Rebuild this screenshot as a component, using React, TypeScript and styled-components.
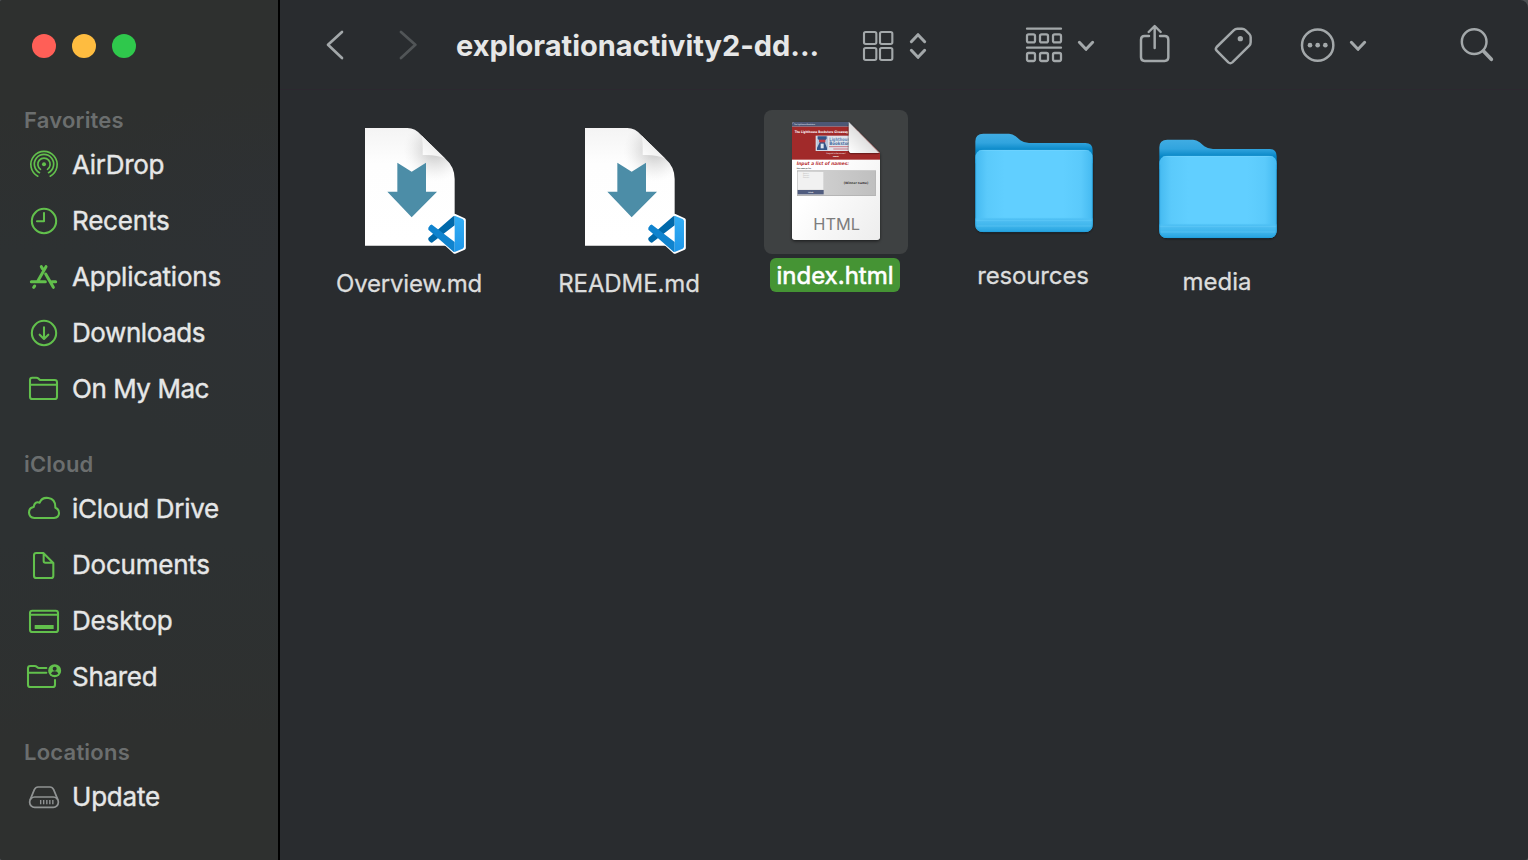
import React from "react";
import styled, { createGlobalStyle } from "styled-components";

const GREEN = "#62c04c";
const GREY = "#a3a8aa";

const GlobalStyle = createGlobalStyle`
  * { box-sizing: border-box; }
  body { margin: 0; background: #4c5052; overflow: hidden; }
`;

const Window = styled.div`
  display: flex;
  width: 1528px;
  height: 860px;
  border-radius: 3px 8px 3px 3px;
  background: #292c2f;
  color: #e6e7e7;
  font-family: Inter, "Liberation Sans", sans-serif;
  overflow: hidden;
`;

const Sidebar = styled.aside`
  flex: 0 0 280px;
  display: flex;
  flex-direction: column;
  border-right: 2px solid #000;
  background:
    radial-gradient(circle at 100% 32%, #2e3134 0, #2e313400 200px),
    linear-gradient(180deg, #2e302f 0, #2e302f 110px, #2d3132 250px, #2d3132 540px, #2e302f 740px, #2e302f 100%);
`;

const Lights = styled.div`
  display: flex;
  gap: 16px;
  height: 103px;
  padding: 34px 32px 0;
`;

const Light = styled.span<{ $color: string }>`
  width: 24px;
  height: 24px;
  border-radius: 50%;
  background: ${(p) => p.$color};
`;

const Section = styled.section`
  margin-bottom: 30px;
`;

const Heading = styled.h2<{ $track: number }>`
  margin: 0;
  padding-left: 24px;
  font-size: 22px;
  line-height: 34px;
  font-weight: 600;
  letter-spacing: ${(p) => p.$track}px;
  color: #6b6e6e;
`;

const Row = styled.div`
  display: flex;
  align-items: center;
  gap: 8px;
  height: 56px;
  padding-left: 24px;
`;

const RowText = styled.span<{ $track: number }>`
  font-size: 26px;
  line-height: 32px;
  font-weight: 400;
  white-space: nowrap;
  letter-spacing: ${(p) => p.$track}px;
  -webkit-text-stroke: 0.4px currentColor;
`;

const RowIcon = styled.svg<{ $color?: string }>`
  flex: none;
  width: 40px;
  height: 40px;
  color: ${(p) => p.$color ?? GREEN};
  fill: none;
  stroke: currentColor;
  stroke-width: 6.2;
  stroke-linecap: round;
  stroke-linejoin: round;
`;

const Main = styled.main`
  flex: 1;
  display: flex;
  flex-direction: column;
`;

const Toolbar = styled.header`
  display: flex;
  align-items: center;
  height: 90px;
  padding-left: 44px;
  box-shadow: inset 0 -1px #2c2830;
`;

const Tool = styled.svg<{ $width: number; $lead?: number }>`
  flex: none;
  width: ${(p) => p.$width}px;
  height: 48px;
  margin-left: ${(p) => p.$lead ?? 0}px;
  fill: none;
  stroke: ${GREY};
  stroke-width: 7.4;
  stroke-linecap: round;
  stroke-linejoin: round;
`;

const Title = styled.h1`
  flex: 0 0 368px;
  margin: 0 36px;
  padding-top: 1px;
  font-size: 29px;
  line-height: 40px;
  font-weight: 700;
  letter-spacing: -0.02px;
  white-space: nowrap;
`;

const Files = styled.div`
  display: flex;
  align-items: flex-start;
  padding: 20px 0 0 57px;
`;

const File = styled.figure<{ $lead: number; $drop: number }>`
  display: flex;
  flex-direction: column;
  align-items: center;
  gap: 4px;
  width: 144px;
  margin: ${(p) => p.$drop}px 0 0 ${(p) => p.$lead}px;
`;

const Artwork = styled.svg<{ $selected?: boolean }>`
  display: block;
  width: 144px;
  height: 144px;
  border-radius: 8px;
  background: ${(p) => (p.$selected ? "#3e4142" : "transparent")};
`;

const Caption = styled.figcaption<{ $selected?: boolean; $track: number }>`
  margin-right: ${(p) => (p.$selected ? 2 : 0)}px;
  padding: 2px 6px 0;
  border-radius: 6px;
  font-size: 24px;
  line-height: 32px;
  white-space: nowrap;
  letter-spacing: ${(p) => p.$track}px;
  color: ${(p) => (p.$selected ? "#fff" : "#dcdddd")};
  background: ${(p) => (p.$selected ? "#459434" : "transparent")};
  -webkit-text-stroke: ${(p) => (p.$selected ? 0.6 : 0.3)}px currentColor;
`;

const AirDropIcon = () => (
  <RowIcon viewBox="72 435 120 120">
    <g strokeWidth="5">
      <path d="M113.500 528.500A39.500 39.500 0 1 1 150.500 528.500" />
      <path d="M118.500 518A29 29 0 1 1 145.500 518" />
      <path d="M121.500 508A18.500 18.500 0 1 1 142.500 508" />
    </g>
    <circle cx="132" cy="493" r="6" fill="currentColor" stroke="none" />
  </RowIcon>
);

const ClockIcon = () => (
  <RowIcon viewBox="72 603 120 120">
    <circle cx="132" cy="663" r="36.500" />
    <path d="M132 639V664H111" />
  </RowIcon>
);

const AppsIcon = () => (
  <RowIcon viewBox="72 51 120 120">
    <g strokeWidth="9">
      <path d="M138 80L114 122M124 80L128 87M94 125H136M137 102L160 142M155 125H167M104 138L101 142" />
    </g>
  </RowIcon>
);

const DownloadIcon = () => (
  <RowIcon viewBox="72 219 120 120">
    <circle cx="132" cy="279" r="36.500" />
    <path d="M132 262V296M119 284L132 297L145 284" />
  </RowIcon>
);

const FolderIcon = () => (
  <RowIcon viewBox="72 387 120 120">
    <path d="M90 470V420Q90 413 97 413H109Q113 413 116 416L119 419Q120 420 124 420H164Q171 420 171 427V470Q171 477 164 477H97Q90 477 90 470ZM90 434H171" />
  </RowIcon>
);

const CloudIcon = () => (
  <RowIcon viewBox="72 147 120 120">
    <path d="M103 234H162Q177 233 177 219Q177 207 166 203Q167 177 145 174Q126 171 119 188Q104 183 101 201Q87 203 87 218Q88 233 103 234Z" />
  </RowIcon>
);

const DocumentIcon = () => (
  <RowIcon viewBox="72 315 120 120">
    <path d="M109 339H130L160 369V407Q160 414 153 414H109Q102 414 102 407V346Q102 339 109 339ZM131 341V363Q131 368 136 368H158" />
  </RowIcon>
);

const DesktopIcon = () => (
  <RowIcon viewBox="72 483 120 120">
    <rect x="90" y="512" width="84" height="64" rx="7" />
    <path d="M90 524H174" />
    <rect x="104" y="555" width="57" height="12" rx="1" fill="currentColor" stroke="none" />
  </RowIcon>
);

const SharedIcon = () => (
  <RowIcon viewBox="72 651 120 120">
    <path d="M139 684H117Q114 684 111 681Q108 678 104 678H91Q84 678 84 685V734Q84 741 91 741H158Q165 741 165 734V720M84 698H139" />
    <circle cx="164" cy="692" r="19.500" fill="currentColor" stroke="none" />
    <circle cx="164" cy="686" r="6" fill="#2d3030" stroke="none" />
    <path d="M153 701Q155 694 164 694T175 701Q171 705 164 705T153 701Z" fill="#2d3030" stroke="none" />
  </RowIcon>
);

const DriveIcon = () => (
  <RowIcon viewBox="72 261 120 120" $color="#909393">
    <g strokeWidth="5.2">
      <rect x="89" y="321" width="86" height="31" rx="15" />
      <path d="M91 328L103 299Q107 291 114 291H150Q157 291 161 299L173 328" />
    </g>
    <g strokeWidth="4.2" strokeLinecap="butt">
      <path d="M122 330V343M131 330V343M140.500 330V343M149.500 330V343M158.500 330V343" />
    </g>
  </RowIcon>
);

const MarkdownArt = ({ id }: { id: string }) => (
  <Artwork viewBox="51 54 432 432">
    <defs>
      <linearGradient id={`${id}-page`} x1="0" y1="0" x2="0" y2="1">
        <stop offset="0" stopColor="#f4f4f4" />
        <stop offset=".3" stopColor="#fefefe" />
        <stop offset="1" stopColor="#fff" />
      </linearGradient>
      <radialGradient id={`${id}-shade`} gradientUnits="userSpaceOnUse" cx="345" cy="150" r="95">
        <stop offset="0" stopColor="#999" stopOpacity=".6" />
        <stop offset=".6" stopColor="#bbb" stopOpacity=".25" />
        <stop offset="1" stopColor="#ddd" stopOpacity="0" />
      </radialGradient>
      <linearGradient id={`${id}-fold`} x1="0" y1="1" x2=".6" y2=".4">
        <stop offset="0" stopColor="#fff" />
        <stop offset="1" stopColor="#ededed" />
      </linearGradient>
      <linearGradient id={`${id}-blade`} x1="0" y1="0" x2="0" y2="1">
        <stop offset="0" stopColor="#32aef5" />
        <stop offset="1" stopColor="#1f96e8" />
      </linearGradient>
    </defs>
    <path d="M135 84H262Q286 84 304 106L376 176Q404 200 404 237V437H135Z" fill={`url(#${id}-page)`} />
    <path d="M135 84H262Q286 84 304 106L376 176Q404 200 404 237V437H135Z" fill={`url(#${id}-shade)`} />
    <path d="M304 106Q309 120 308 165Q350 163 376 176Z" fill={`url(#${id}-fold)`} />
    <path d="M232 188L275 215L318 188V275H351L275 352L202 275H232Z" fill="#4c8da7" />
    <g stroke="#fff" strokeWidth="11" strokeLinejoin="round" fill="#fff">
      <path d="M404 347L432 360V444L404 456L363 418L337 430L326 420L347 402L326 384L337 374L363 387Z" />
    </g>
    <path d="M404 348V376L336 428Q332 430 325 420V414L398 350Q401 347 404 348Z" fill="#0069aa" />
    <path d="M404 456V426L336 374Q332 372 325 383V389L398 453Q401 457 404 456Z" fill="#0f83ce" />
    <path d="M404 347L428 357Q432 359 432 364V439Q432 444 428 446L404 456Z" fill={`url(#${id}-blade)`} />
  </Artwork>
);

const HtmlArt = () => (
  <Artwork viewBox="27 30 432 432" $selected>
    <defs>
      <clipPath id="html-page">
        <path d="M118 66H281L375 159V412Q375 420 367 420H119Q111 420 111 412V73Q111 66 118 66Z" />
      </clipPath>
      <linearGradient id="html-fold" x1="0" y1="1" x2=".55" y2=".45">
        <stop offset="0" stopColor="#fff" />
        <stop offset="1" stopColor="#dcdcdc" />
      </linearGradient>
      <linearGradient id="html-paper" x1="0" y1="0" x2="1" y2="1">
        <stop offset=".4" stopColor="#fff" />
        <stop offset="1" stopColor="#ededed" />
      </linearGradient>
      <linearGradient id="html-panel" x1="0" y1="0" x2="1" y2="0">
        <stop offset="0" stopColor="#d6d6d6" />
        <stop offset="1" stopColor="#bfbfbf" />
      </linearGradient>
      <filter id="html-soft" x="-20%" y="-20%" width="140%" height="140%">
        <feGaussianBlur stdDeviation="5" />
      </filter>
    </defs>
    <path d="M118 70H281L375 163V412Q375 424 367 424H119Q111 424 111 412Z" fill="#000" opacity=".55" filter="url(#html-soft)" />
    <g clipPath="url(#html-page)" fontFamily="DejaVu Sans, sans-serif">
      <rect x="111" y="66" width="264" height="354" fill="url(#html-paper)" />
      <rect x="111" y="66" width="264" height="14" fill="#4c5775" />
      <rect x="111" y="80" width="264" height="99" fill="#a12a2a" />
      <text x="117" y="75" fontSize="6" fontWeight="700" fill="#c9cede" textLength="63" lengthAdjust="spacingAndGlyphs">The Lighthouse Bookstore</text>
      <text x="119" y="100" fontSize="10" fontWeight="700" fill="#fff" textLength="200" lengthAdjust="spacingAndGlyphs">The Lighthouse Bookstore Giveaway Winners</text>
      <rect x="182" y="107" width="120" height="46" fill="#dfe2ea" />
      <rect x="185" y="109" width="34" height="42" fill="#b9c6da" />
      <path d="M188 109H215V116L209 122H194L188 116ZM196 123H208L216 144V150H186V144Z" fill="#355487" />
      <rect x="192" y="119" width="19" height="8" fill="#c33b45" />
      <rect x="197" y="131" width="9" height="14" fill="#dce4f0" />
      <text x="223" y="122" fontSize="14" fontWeight="700" fill="#6488b3" textLength="68" lengthAdjust="spacingAndGlyphs">Lighthouse</text>
      <text x="223" y="135" fontSize="14" fontWeight="700" fill="#456b9e" textLength="68" lengthAdjust="spacingAndGlyphs">Bookstore</text>
      <path d="M222 140H290M235 147H280" stroke="#ca7784" strokeWidth="3" />
      <rect x="280" y="153" width="24" height="10" fill="#a12a2a" />
      <text x="214" y="162" fontSize="6" fill="#fff" textLength="58" lengthAdjust="spacingAndGlyphs">Congrats to the winners!</text>
      <text x="234" y="171" fontSize="6" fontWeight="700" fill="#fff" textLength="17" lengthAdjust="spacingAndGlyphs">names</text>
      <text x="125" y="196" fontSize="14" fontWeight="700" fontStyle="italic" fill="#b62e30" textLength="157" lengthAdjust="spacingAndGlyphs">Input a list of names:</text>
      <text x="125" y="207" fontSize="5.500" fontWeight="700" fill="#333" textLength="43" lengthAdjust="spacingAndGlyphs">Enter names per line</text>
      <rect x="126" y="211" width="237" height="77" fill="#b5b5b5" />
      <rect x="128" y="213" width="233" height="72" fill="url(#html-panel)" />
      <rect x="128" y="216" width="77" height="53" fill="#f1f1f1" />
      <g fontSize="5" fill="#aaa">
        <text x="144" y="223">Names</text>
        <text x="144" y="229">Sample</text>
        <text x="144" y="235">Sample</text>
      </g>
      <rect x="128" y="270" width="78" height="13" fill="#505c7e" />
      <text x="159" y="279" fontSize="5.500" fill="#fff" textLength="16">Submit</text>
      <text x="266" y="253" fontSize="9.500" fontWeight="700" fill="#333" textLength="74" lengthAdjust="spacingAndGlyphs">(Winner name)</text>
    </g>
    <path d="M281 66L375 159Q372 163 366 163H289Q278 162 278 150V76Z" fill="#000" opacity=".3" clipPath="url(#html-page)" />
    <path d="M281 66L373 159H290Q281 159 281 149Z" fill="url(#html-fold)" />
    <text x="175" y="390" fontFamily="Inter, sans-serif" fontSize="49" fill="#7d7d7d" textLength="140">HTML</text>
  </Artwork>
);

const FolderArt = ({ id }: { id: string }) => (
  <Artwork viewBox="3 0 432 432">
    <defs>
      <linearGradient id={`${id}-back`} gradientUnits="userSpaceOnUse" x1="0" y1="70" x2="0" y2="122">
        <stop offset="0" stopColor="#41ade3" />
        <stop offset=".55" stopColor="#31a4de" />
        <stop offset="1" stopColor="#0686c6" />
      </linearGradient>
      <linearGradient id={`${id}-front`} x1="0" y1="0" x2="1" y2="0">
        <stop offset="0" stopColor="#45baf1" />
        <stop offset=".1" stopColor="#5bcafb" />
        <stop offset=".25" stopColor="#61cfff" />
        <stop offset=".75" stopColor="#61cfff" />
        <stop offset=".9" stopColor="#5bcafb" />
        <stop offset="1" stopColor="#45baf1" />
      </linearGradient>
      <linearGradient id={`${id}-base`} gradientUnits="userSpaceOnUse" x1="0" y1="322" x2="0" y2="366">
        <stop offset="0" stopColor="#48bdf3" stopOpacity="0" />
        <stop offset=".12" stopColor="#4fc0f4" />
        <stop offset=".55" stopColor="#41b6ec" />
        <stop offset="1" stopColor="#26a3df" />
      </linearGradient>
      <filter id={`${id}-soft`} x="-10%" y="-10%" width="120%" height="120%">
        <feGaussianBlur stdDeviation="3" />
      </filter>
    </defs>
    <rect x="47" y="120" width="351" height="249" rx="24" fill="#000" opacity=".55" filter={`url(#${id}-soft)`} />
    <path d="M46 142V94Q46 71 70 71H147Q158 71 167 79L181 91Q192 99 207 99H376Q398 99 398 121V160H46Z" fill={`url(#${id}-back)`} />
    <path d="M46 144Q46 120 70 120H374Q398 120 398 144V342Q398 366 374 366H70Q46 366 46 342Z" fill={`url(#${id}-front)`} />
    <path d="M46 322H398V342Q398 366 374 366H70Q46 366 46 342Z" fill={`url(#${id}-base)`} />
    <path d="M47 332H397M47 348H397" stroke="#69cff9" strokeWidth="2" opacity=".7" />
    <path d="M56 123Q62 121 70 121H374Q382 121 388 123" stroke="#7bd8ff" strokeWidth="2" fill="none" opacity=".8" />
    <path d="M47 146V342Q47 365 70 365H374Q397 365 397 342V146" stroke="#219cd9" strokeWidth="2.500" fill="none" opacity=".75" />
  </Artwork>
);

const sections = [
  {
    name: "Favorites", track: 0.2,
    rows: [
      { label: "AirDrop", track: -0.3, Icon: AirDropIcon },
      { label: "Recents", track: -0.2, Icon: ClockIcon },
      { label: "Applications", track: -0.22, Icon: AppsIcon },
      { label: "Downloads", track: -0.42, Icon: DownloadIcon },
      { label: "On My Mac", track: -0.45, Icon: FolderIcon },
    ],
  },
  {
    name: "iCloud", track: 0.2,
    rows: [
      { label: "iCloud Drive", track: -0.28, Icon: CloudIcon },
      { label: "Documents", track: -0.22, Icon: DocumentIcon },
      { label: "Desktop", track: -0.15, Icon: DesktopIcon },
      { label: "Shared", track: -0.3, Icon: SharedIcon },
    ],
  },
  {
    name: "Locations", track: 0.22,
    rows: [{ label: "Update", track: -0.2, Icon: DriveIcon }],
  },
];

const App = () => (
  <>
    <GlobalStyle />
    <Window>
      <Sidebar>
        <Lights>
          <Light $color="#ff5f57" />
          <Light $color="#febc40" />
          <Light $color="#2fc84c" />
        </Lights>
        {sections.map((s) => (
          <Section key={s.name}>
            <Heading $track={s.track}>{s.name}</Heading>
            {s.rows.map(({ label, track, Icon }) => (
              <Row key={label}>
                <Icon />
                <RowText $track={track}>{label}</RowText>
              </Row>
            ))}
          </Section>
        ))}
      </Sidebar>
      <Main>
        <Toolbar>
          <Tool $width={24} viewBox="72 63 72 144">
            <path d="M126 96L84 134.500L126 174" strokeWidth="8" />
          </Tool>
          <Tool $width={24} $lead={48} viewBox="288 63 72 144" opacity=".33">
            <path d="M303 96L346 134.500L303 174" strokeWidth="8" />
          </Tool>
          <Title>explorationactivity2-dd...</Title>
          <Tool $width={72} viewBox="180 63 216 144">
            <g strokeWidth="6.4">
              <rect x="192" y="96" width="37" height="36" rx="5" />
              <rect x="240" y="96" width="37" height="36" rx="5" />
              <rect x="192" y="144" width="37" height="36" rx="5" />
              <rect x="240" y="144" width="37" height="36" rx="5" />
            </g>
            <g strokeWidth="9">
              <path d="M334 125L354 104L374 125M334 151L354 172L374 151" />
            </g>
          </Tool>
          <Tool $width={80} $lead={88} viewBox="660 63 240 144">
            <g strokeWidth="6.8">
              <path d="M681 86H783M681 143H783" />
              <rect x="681" y="103" width="24" height="24" rx="5" />
              <rect x="720" y="103" width="24" height="24" rx="5" />
              <rect x="759" y="103" width="24" height="24" rx="5" />
              <rect x="681" y="159" width="24" height="24" rx="5" />
              <rect x="720" y="159" width="24" height="24" rx="5" />
              <rect x="759" y="159" width="24" height="24" rx="5" />
            </g>
            <g strokeWidth="9">
              <path d="M838 127L858 148L878 127" />
            </g>
          </Tool>
          <Tool $width={42} $lead={34} viewBox="72 63 126 144">
            <path d="M117 108H104Q93 108 93 119V172Q93 183 104 183H164Q175 183 175 172V119Q175 108 164 108H150M134 144V79M116 96L134 78L152 96" />
          </Tool>
          <Tool $width={42} $lead={36} viewBox="306 63 126 144">
            <path d="M320 141L371 91Q376 86 382 86H396Q402 86 406 90L418 102Q422 106 422 112V127Q422 133 418 137L367 187Q361 192 355 187L320 152Q315 147 320 141Z" />
            <circle cx="391" cy="116" r="8" fill={GREY} stroke="none" />
          </Tool>
          <Tool $width={72} $lead={44} viewBox="564 63 216 144">
            <circle cx="623" cy="135.500" r="47" />
            <g fill={GREY} stroke="none">
              <circle cx="600" cy="135.500" r="7" />
              <circle cx="623" cy="135.500" r="7" />
              <circle cx="646" cy="135.500" r="7" />
            </g>
            <g strokeWidth="9">
              <path d="M724 127L744 148L764 127" />
            </g>
          </Tool>
          <Tool $width={38} $lead={88} viewBox="1044 63 114 144">
            <circle cx="1092.500" cy="125" r="37" />
            <g strokeWidth="11">
              <path d="M1121 154L1144 178" />
            </g>
          </Tool>
        </Toolbar>
        <Files>
          <File $lead={0} $drop={8}>
            <MarkdownArt id="overview" />
            <Caption $track={-0.2}>Overview.md</Caption>
          </File>
          <File $lead={76} $drop={8}>
            <MarkdownArt id="readme" />
            <Caption $track={-0.12}>README.md</Caption>
          </File>
          <File $lead={63} $drop={0}>
            <HtmlArt />
            <Caption $selected $track={0}>index.html</Caption>
          </File>
          <File $lead={53} $drop={0}>
            <FolderArt id="resources" />
            <Caption $track={-0.15}>resources</Caption>
          </File>
          <File $lead={40} $drop={6}>
            <FolderArt id="media" />
            <Caption $track={0}>media</Caption>
          </File>
        </Files>
      </Main>
    </Window>
  </>
);

export default App;
